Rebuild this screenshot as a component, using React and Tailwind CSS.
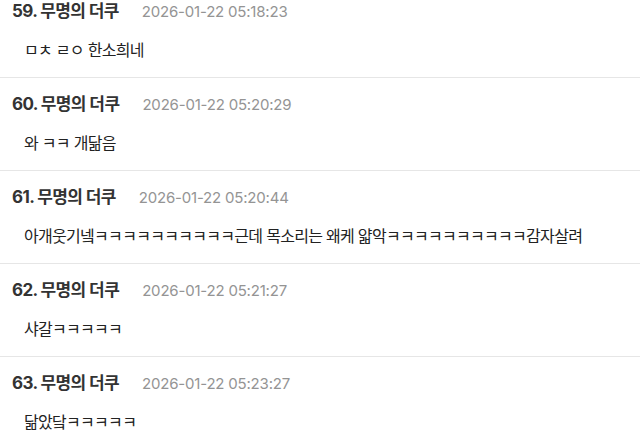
const rows = [
  { n: 59, t: "2026-01-22 05:18:23", body: "ㅁㅊ ㄹㅇ 한소희네" },
  { n: 60, t: "2026-01-22 05:20:29", body: "와 ㅋㅋ 개닮음" },
  { n: 61, t: "2026-01-22 05:20:44", body: "아개웃기넼ㅋㅋㅋㅋㅋㅋㅋㅋㅋㅋ근데 목소리는 왜케 얇악ㅋㅋㅋㅋㅋㅋㅋㅋㅋㅋ감자살려" },
  { n: 62, t: "2026-01-22 05:21:27", body: "샤갈ㅋㅋㅋㅋㅋ" },
  { n: 63, t: "2026-01-22 05:23:27", body: "닮았닼ㅋㅋㅋㅋㅋ" },
];

export default function App() {
  return (
    <div
      className="w-[640px] h-[447px] overflow-hidden bg-white"
      style={{ fontFamily: 'Inter, "Noto Sans CJK KR", sans-serif' }}
    >
      <div className="-mt-[15px]">
        {rows.map((r) => (
          <div key={r.n} className="border-b border-[#e6e6e6] pt-[17px] pb-[16px]">
            <div className="flex items-center h-[20px] pl-[12px]">
              <span className="text-[17px] font-bold text-[#333] tracking-[-0.6px]">
                {r.n}. 무명의 더쿠
              </span>
              <span className="ml-[23px] text-[15px] text-[#949494] tracking-[-0.2px]">{r.t}</span>
            </div>
            <div className="mt-[17px] h-[22px] flex items-center pl-[24px] text-[16px] text-[#222] tracking-[-0.7px]">
              {r.body}
            </div>
          </div>
        ))}
      </div>
    </div>
  );
}
